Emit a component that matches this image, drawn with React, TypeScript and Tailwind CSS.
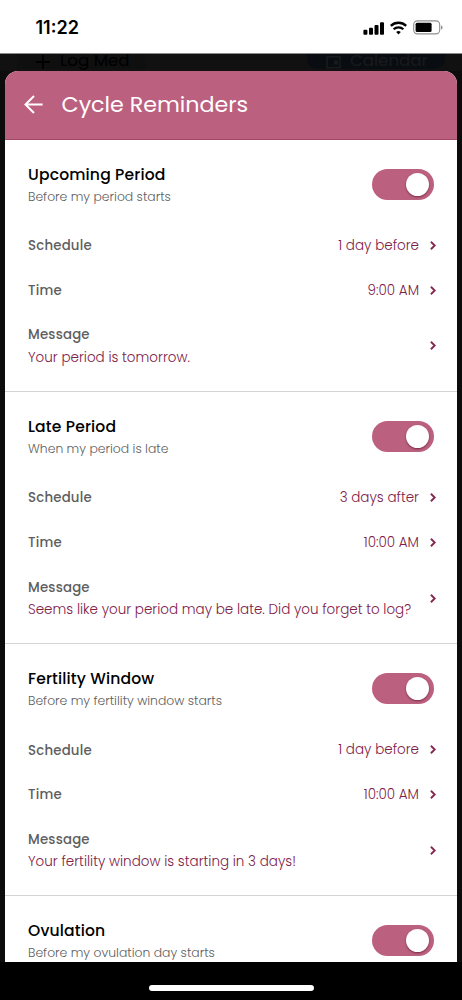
type Section = {
  title: string;
  subtitle: string;
  schedule?: string;
  time?: string;
  message?: string;
};

const sections: Section[] = [
  {
    title: 'Upcoming Period',
    subtitle: 'Before my period starts',
    schedule: '1 day before',
    time: '9:00 AM',
    message: 'Your period is tomorrow.',
  },
  {
    title: 'Late Period',
    subtitle: 'When my period is late',
    schedule: '3 days after',
    time: '10:00 AM',
    message: 'Seems like your period may be late. Did you forget to log?',
  },
  {
    title: 'Fertility Window',
    subtitle: 'Before my fertility window starts',
    schedule: '1 day before',
    time: '10:00 AM',
    message: 'Your fertility window is starting in 3 days!',
  },
  {
    title: 'Ovulation',
    subtitle: 'Before my ovulation day starts',
  },
];

function Chevron() {
  return (
    <svg className="block h-[9px] w-[6px] shrink-0" viewBox="0 0 6 9" fill="none" stroke="#832a51" strokeWidth="1.9">
      <path d="M0.9 0.8 4.7 4.5 0.9 8.2" />
    </svg>
  );
}

function Toggle() {
  return (
    <button
      role="switch"
      aria-checked="true"
      className="mt-[5px] flex h-[31px] w-[62px] shrink-0 items-center justify-end rounded-full bg-[#bc6080] pr-[5px]"
    >
      <span className="block h-[23px] w-[23px] rounded-full bg-white shadow-[0_1px_2px_rgba(60,0,25,0.55)]" />
    </button>
  );
}

function Row({ label, value }: { label: string; value: string }) {
  return (
    <div className="flex h-[44.7px] items-center">
      <span className="pt-[1.6px] text-[13.3px] font-medium tracking-[0.2px] text-[#5e5e5e]">{label}</span>
      <span className="mr-[11px] ml-auto pt-[1.6px] text-[13.5px] font-light text-[#7d2049]">{value}</span>
      <Chevron />
    </div>
  );
}

function ReminderSection({ title, subtitle, schedule, time, message }: Section) {
  return (
    <section className="h-[252.2px] shrink-0 border-b border-[#d4d4d4] pt-[24px] pr-[20.5px] pl-[23px]">
      <div className="flex h-[59.5px] justify-between pr-[2px]">
        <div>
          <h2 className="text-[15.6px] leading-[22px] font-medium tracking-[0.15px] text-black">{title}</h2>
          <p className="text-[12.4px] leading-[22.5px] font-light text-[#606060]">{subtitle}</p>
        </div>
        <Toggle />
      </div>
      {schedule && <Row label="Schedule" value={schedule} />}
      {time && <Row label="Time" value={time} />}
      {message && (
        <div className="flex items-center justify-between pt-[11px]">
          <div className="-mb-[1px] pt-[1px] leading-[22.5px] whitespace-nowrap">
            <div className="text-[13.3px] font-medium tracking-[0.2px] text-[#5e5e5e]">Message</div>
            <div className="text-[13.5px] font-light text-[#7d2049]">{message}</div>
          </div>
          <Chevron />
        </div>
      )}
    </section>
  );
}

function StatusBar() {
  return (
    <header className="flex h-[54px] shrink-0 items-start justify-between border-b border-[#8a8a8a] bg-white pt-[18px] pr-[19px] pl-[35.5px]">
      <span className="font-['Inter',sans-serif] text-[18px] leading-[20px] font-semibold text-black">11:22</span>
      <div className="flex items-center gap-[6px] pt-[2px]">
        <svg className="block h-[14px] w-[21px]" viewBox="0 0 21 14" fill="#000">
          <rect x="0.4" y="8.8" width="4" height="4.9" rx="0.9" />
          <rect x="6" y="6.8" width="4" height="6.9" rx="0.9" />
          <rect x="11.5" y="4" width="4" height="9.7" rx="0.9" />
          <rect x="17" y="1.2" width="4" height="12.5" rx="0.9" />
        </svg>
        <svg className="block h-[14px] w-[17px]" viewBox="0 0 17 14" fill="none" stroke="#000">
          <path d="M0.8 4.9a11 11 0 0 1 15.4 0" strokeWidth="2.3" />
          <path d="M3.6 8.3a7 7 0 0 1 9.8 0" strokeWidth="2.2" />
          <path d="M8.5 13.4 6.2 11.1a3.3 3.3 0 0 1 4.6 0Z" fill="#000" stroke="none" />
        </svg>
        <svg className="block h-[15px] w-[30px]" viewBox="0 0 30 15">
          <rect x="0.7" y="0.9" width="26" height="13" rx="3.8" fill="none" stroke="#8f8f8f" strokeWidth="1.1" />
          <rect x="2.6" y="2.8" width="16" height="9.2" rx="1.5" fill="#000" />
          <path d="M28 5.2q1.6.8 1.6 2.3t-1.6 2.3Z" fill="#8f8f8f" />
        </svg>
      </div>
    </header>
  );
}

export default function App() {
  return (
    <div className="flex h-[1000px] w-[462px] flex-col overflow-hidden bg-black font-['Poppins',sans-serif]">
      <StatusBar />
      <div className="flex h-[17px] shrink-0 items-start justify-between overflow-hidden bg-[#111] pr-[17px] pl-[17px]">
        <div className="flex h-[15px] w-[129px] items-center gap-[10px] bg-[#0f0f0f] pl-[19px] text-[16.7px] leading-[15px] text-black">
          <svg className="block h-[14px] w-[14px]" viewBox="0 0 14 14" stroke="#000" strokeWidth="1.8">
            <path d="M7 0v14M0 7h14" />
          </svg>
          <span className="-mt-[2px]">Log Med</span>
        </div>
        <div className="flex h-[15px] w-[138px] items-center gap-[9px] rounded-b-[10px] bg-[#090d12] pl-[19px] text-[16.6px] leading-[15px] text-[#191a1b]">
          <svg className="block h-[14px] w-[15px]" viewBox="0 0 15 14" fill="none" stroke="#191a1b" strokeWidth="1.6">
            <path d="M1 1.8h13v11H1Z" />
            <path d="M8 5.5h4v4H8Z" fill="#191a1b" stroke="none" />
          </svg>
          <span className="-mt-[2px]">Calendar</span>
        </div>
      </div>
      <div className="flex h-[891px] shrink-0 bg-[#0c0c0c] pr-[5.5px] pl-[5px]">
        <main className="flex h-[891px] flex-1 flex-col overflow-hidden rounded-t-[13px] bg-white">
          <div className="flex h-[68.6px] shrink-0 items-center border-b border-[#a04869] bg-[#bc6080] pl-[18.5px]">
            <svg className="block h-[19px] w-[19px]" viewBox="0 0 19 19" fill="none" stroke="#fff" strokeWidth="2">
              <path d="M18.6 9.5H1.4M10 1 1.5 9.5 10 18" />
            </svg>
            <h1 className="ml-[19px] text-[22.2px] font-normal text-white">Cycle Reminders</h1>
          </div>
          {sections.map((s) => (
            <ReminderSection key={s.title} {...s} />
          ))}
        </main>
      </div>
      <footer className="flex flex-1 items-center justify-center pt-[14px]">
        <div className="h-[6px] w-[165px] rounded-full bg-white" />
      </footer>
    </div>
  );
}
